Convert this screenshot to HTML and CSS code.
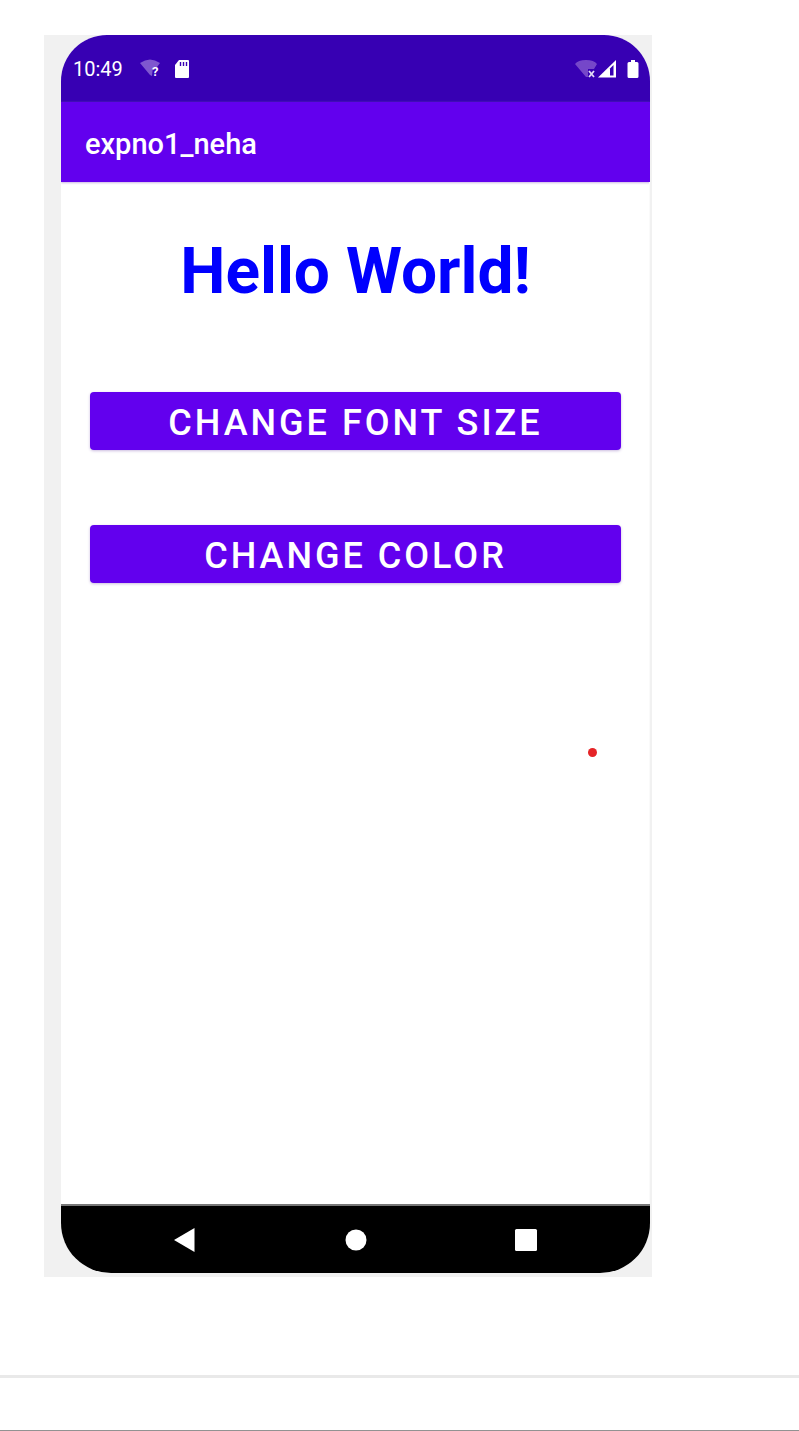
FILE: index.html
```html
<!DOCTYPE html>
<html lang="en">
<head>
<meta charset="utf-8">
<meta name="viewport" content="width=device-width, initial-scale=1">
<title>expno1_neha</title>
<link rel="stylesheet" href="styles.css">
</head>
<body>
<main class="sheet">
  <div class="emulator">
    <div class="phone">
      <div class="status">
        <span class="clock">10:49</span>
        <svg class="wifi-unknown" width="22" height="20" viewBox="0 0 22 20" aria-hidden="true">
          <path d="M0 4Q10 -3 20 4L17 8H13L12 17L10 16Z" fill="#7f57cf"/>
          <text x="12" y="17" class="mark">?</text>
        </svg>
        <svg class="sd-card" width="16" height="20" viewBox="0 0 16 20" aria-hidden="true">
          <path d="M5 1H14Q15 1 15 2V18Q15 19 14 19H2Q1 19 1 18V6Z" fill="#fff"/>
          <path d="M6.500 3V7M9.500 3V7M12.500 3V7" stroke="#3700b3" stroke-width="1.400"/>
        </svg>
        <svg class="wifi-off" width="22" height="20" viewBox="0 0 22 20" aria-hidden="true">
          <path d="M0 5Q3 1 11 1Q19 1 22 5L19 10H13V18H11Z" fill="#7547c9"/>
          <path d="M14 12L19 18M19 12L14 18" stroke="#e4dcf6" stroke-width="1.800"/>
        </svg>
        <svg class="signal" width="20" height="20" viewBox="0 0 20 20" aria-hidden="true">
          <path d="M1 18.500L19 1V18.500Z" fill="#fff"/>
          <path d="M13 9.500L16.500 6V16.500H13Z" fill="#3700b3"/>
        </svg>
        <svg class="battery" width="12" height="20" viewBox="0 0 12 20" aria-hidden="true">
          <path d="M4 1H8V3H10Q11.500 3 11.500 4.500V17.500Q11.500 19 10 19H2Q.5 19 .5 17.500V4.500Q.5 3 2 3H4Z" fill="#fff"/>
        </svg>
      </div>
      <header class="appbar">expno1_neha</header>
      <section class="content">
        <h1 class="greeting">Hello World!</h1>
        <button class="action" type="button">CHANGE FONT SIZE</button>
        <button class="action" type="button">CHANGE COLOR</button>
        <span class="pointer"></span>
      </section>
      <nav class="navbar">
        <button class="nav" type="button" aria-label="Back"><svg width="24" height="24" viewBox="0 0 24 24"><path d="M0 12L20.500 0V24Z" fill="#fff"/></svg></button>
        <button class="nav" type="button" aria-label="Home"><svg width="24" height="24" viewBox="0 0 24 24"><circle cx="12" cy="12" r="10.500" fill="#fff"/></svg></button>
        <button class="nav" type="button" aria-label="Overview"><svg width="24" height="24" viewBox="0 0 24 24"><rect x="1" y="1" width="22" height="22" rx="1.500" fill="#fff"/></svg></button>
      </nav>
    </div>
  </div>
  <hr class="rule">
</main>
</body>
</html>
```
FILE: styles.css
```css
* { box-sizing: border-box; }
body {
  margin: 0;
  background: #fff;
  font-family: Roboto, "Liberation Sans", sans-serif;
}
.sheet {
  display: flex;
  flex-direction: column;
  min-height: 100vh;
  padding-top: 35px;
  border-bottom: 1px solid #929292;
}
.emulator {
  margin: 0 147px 0 44px;
  padding: 0 2px 4px 17px;
  background: #f1f1f1;
}
.phone {
  display: flex;
  flex-direction: column;
  overflow: hidden;
  border-radius: 46px 46px 50px 50px;
  background: #fff;
}
.status {
  display: flex;
  align-items: center;
  height: 67px;
  padding: 0 11px 0 12px;
  background: #3700b3;
  color: #fff;
}
.clock { font-size: 20px; line-height: 24px; }
.wifi-unknown { margin-left: 17px; }
.mark { font-size: 13px; font-weight: 700; fill: #fff; }
.sd-card { margin-left: 12px; }
.wifi-off { margin-left: auto; }
.battery { margin-left: 10px; }
.appbar {
  height: 80px;
  padding: 0 24px;
  background: #6200ee;
  color: #fff;
  font-size: 29px;
  font-weight: 500;
  line-height: 84px;
  box-shadow: 0 1px 2px #c9b6e4;
}
.content {
  position: relative;
  display: flex;
  flex-direction: column;
  min-height: 1022px;
  padding: 52px 28px 50px 29px;
  border-right: 1px solid #fafafa;
}
.greeting {
  margin: 0 0 82px;
  color: #0000fe;
  font-size: 64px;
  font-weight: 700;
  line-height: 76px;
  text-align: center;
}
.action {
  height: 58px;
  margin-bottom: 75px;
  padding: 4px 0 0;
  border: 0;
  border-radius: 4px;
  background: #6200ee;
  color: #fff;
  font-family: inherit;
  font-size: 36px;
  font-weight: 500;
  letter-spacing: 3px;
  box-shadow: 0 1px 3px #cbbcdf;
}
.pointer {
  position: absolute;
  top: 566px;
  right: 52px;
  width: 9px;
  height: 9px;
  border-radius: 50%;
  background: #e52427;
}
.navbar {
  display: flex;
  justify-content: center;
  align-items: center;
  gap: 146px;
  height: 69px;
  border-top: 2px solid #777;
  background: #000;
}
.nav {
  display: flex;
  padding: 0;
  border: 0;
  background: none;
}
.rule {
  width: 100%;
  height: 3px;
  margin: 98px 0 0;
  border: 0;
  background: #e9e9e9;
}
```
